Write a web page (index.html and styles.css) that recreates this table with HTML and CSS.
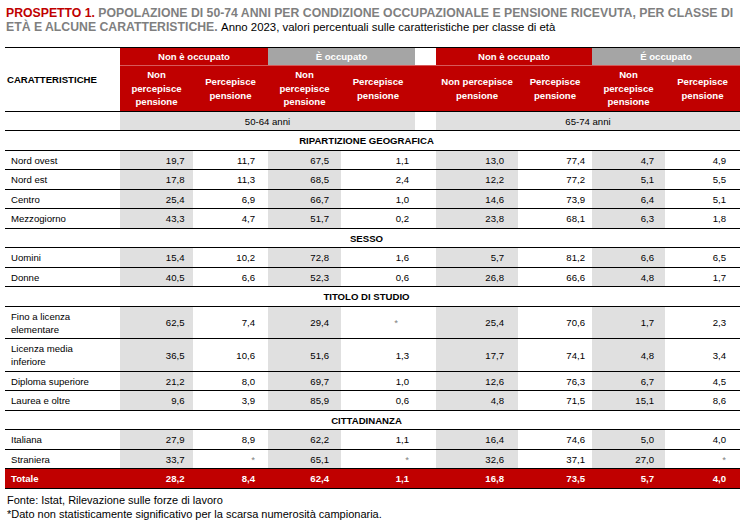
FILE: index.html
```html
<!DOCTYPE html>
<html lang="it">
<head>
<meta charset="utf-8">
<title>Prospetto 1</title>
<link rel="stylesheet" href="styles.css">
</head>
<body>
<div class="page">
  <h1 class="title"><span class="tag">PROSPETTO 1.</span> POPOLAZIONE DI 50-74 ANNI PER CONDIZIONE OCCUPAZIONALE E PENSIONE RICEVUTA, PER CLASSE DI<br>ETÀ E ALCUNE CARATTERISTICHE. <span class="sub">Anno 2023, valori percentuali sulle caratteristiche per classe di età</span></h1>
  <table class="tab">
    <colgroup>
      <col class="w0"><col class="w1"><col class="w2"><col class="w3"><col class="w4"><col class="wg"><col class="w5"><col class="w6"><col class="w7"><col class="w8">
    </colgroup>
    <thead>
      <tr class="h1">
        <th rowspan="2" class="carat">CARATTERISTICHE</th>
        <th colspan="2" class="red">Non è occupato</th>
        <th colspan="2" class="grey">È occupato</th>
        <th class="blank"></th>
        <th colspan="2" class="red">Non è occupato</th>
        <th colspan="2" class="grey">É occupato</th>
      </tr>
      <tr class="h2">
        <th>Non<br>percepisce<br>pensione</th>
        <th>Percepisce<br>pensione</th>
        <th>Non<br>percepisce<br>pensione</th>
        <th>Percepisce<br>pensione</th>
        <th></th>
        <th>Non percepisce<br>pensione</th>
        <th>Percepisce<br>pensione</th>
        <th>Non<br>percepisce<br>pensione</th>
        <th>Percepisce<br>pensione</th>
      </tr>
      <tr class="age">
        <td></td>
        <td colspan="4" class="band">50-64 anni</td>
        <td></td>
        <td colspan="4" class="band">65-74 anni</td>
      </tr>
    </thead>
    <tbody>
      <tr class="sec"><td colspan="10">RIPARTIZIONE GEOGRAFICA</td></tr>
      <tr class="row"><td>Nord ovest</td><td>19,7</td><td>11,7</td><td>67,5</td><td>1,1</td><td></td><td>13,0</td><td>77,4</td><td>4,7</td><td>4,9</td></tr>
      <tr class="row"><td>Nord est</td><td>17,8</td><td>11,3</td><td>68,5</td><td>2,4</td><td></td><td>12,2</td><td>77,2</td><td>5,1</td><td>5,5</td></tr>
      <tr class="row"><td>Centro</td><td>25,4</td><td>6,9</td><td>66,7</td><td>1,0</td><td></td><td>14,6</td><td>73,9</td><td>6,4</td><td>5,1</td></tr>
      <tr class="row"><td>Mezzogiorno</td><td>43,3</td><td>4,7</td><td>51,7</td><td>0,2</td><td></td><td>23,8</td><td>68,1</td><td>6,3</td><td>1,8</td></tr>
      <tr class="sec"><td colspan="10">SESSO</td></tr>
      <tr class="row"><td>Uomini</td><td>15,4</td><td>10,2</td><td>72,8</td><td>1,6</td><td></td><td>5,7</td><td>81,2</td><td>6,6</td><td>6,5</td></tr>
      <tr class="row"><td>Donne</td><td>40,5</td><td>6,6</td><td>52,3</td><td>0,6</td><td></td><td>26,8</td><td>66,6</td><td>4,8</td><td>1,7</td></tr>
      <tr class="sec"><td colspan="10">TITOLO DI STUDIO</td></tr>
      <tr class="row"><td>Fino a licenza<br>elementare</td><td>62,5</td><td>7,4</td><td>29,4</td><td><span class="ast ast-off">*</span></td><td></td><td>25,4</td><td>70,6</td><td>1,7</td><td>2,3</td></tr>
      <tr class="row"><td>Licenza media<br>inferiore</td><td>36,5</td><td>10,6</td><td>51,6</td><td>1,3</td><td></td><td>17,7</td><td>74,1</td><td>4,8</td><td>3,4</td></tr>
      <tr class="row"><td>Diploma superiore</td><td>21,2</td><td>8,0</td><td>69,7</td><td>1,0</td><td></td><td>12,6</td><td>76,3</td><td>6,7</td><td>4,5</td></tr>
      <tr class="row"><td>Laurea e oltre</td><td>9,6</td><td>3,9</td><td>85,9</td><td>0,6</td><td></td><td>4,8</td><td>71,5</td><td>15,1</td><td>8,6</td></tr>
      <tr class="sec"><td colspan="10">CITTADINANZA</td></tr>
      <tr class="row"><td>Italiana</td><td>27,9</td><td>8,9</td><td>62,2</td><td>1,1</td><td></td><td>16,4</td><td>74,6</td><td>5,0</td><td>4,0</td></tr>
      <tr class="row"><td>Straniera</td><td>33,7</td><td><span class="ast">*</span></td><td>65,1</td><td><span class="ast">*</span></td><td></td><td>32,6</td><td>37,1</td><td>27,0</td><td><span class="ast">*</span></td></tr>
      <tr class="row total"><td>Totale</td><td>28,2</td><td>8,4</td><td>62,4</td><td>1,1</td><td></td><td>16,8</td><td>73,5</td><td>5,7</td><td>4,0</td></tr>
    </tbody>
  </table>
  <div class="notes">
    <p>Fonte: Istat, Rilevazione sulle forze di lavoro</p>
    <p>*Dato non statisticamente significativo per la scarsa numerosità campionaria.</p>
  </div>
</div>
</body>
</html>
```
FILE: styles.css
```css
* { box-sizing: border-box; }
html, body { margin: 0; padding: 0; background: #fff; }
body { font-family: "Liberation Sans", Arial, sans-serif; color: #000; }

.page { padding: 7px 4px 0 5px; }

.title {
  margin: 0 0 0 1px;
  font-family: "Liberation Sans", Arial, sans-serif;
  font-size: 12.25px;
  line-height: 13.5px;
  font-weight: bold;
  color: #7f7f7f;
  white-space: nowrap;
}
.tag { color: #c00000; }
.sub { font-weight: normal; color: #000; font-size: 11.4px; }

.tab {
  margin-top: 13px;
  width: 735px;
  table-layout: fixed;
  border-collapse: collapse;
  font-size: 9.6px;
  line-height: 13px;
  border-top: 1px solid #000;
}
.w0 { width: 115px; }
.w1 { width: 73px; }
.w2 { width: 75px; }
.w3 { width: 73px; }
.w4 { width: 74px; }
.wg { width: 21px; }
.w5 { width: 82px; }
.w6 { width: 74px; }
.w7 { width: 73px; }
.w8 { width: 75px; }

.tab th, .tab td { padding: 0; }

.h1 th {
  height: 18px;
  color: #fff;
  font-weight: bold;
  text-align: center;
  vertical-align: middle;
}
.h1 .red { background: #c00000; }
.h1 .grey { background: #a5a5a5; }
.h1 .blank { background: #fff; }
.h1 .carat {
  color: #000;
  text-align: left;
  padding-left: 2px;
  background: #fff;
  border-bottom: 1px solid #000;
}
.h2 th {
  height: 46px;
  background: #c00000;
  color: #fff;
  font-weight: bold;
  text-align: center;
  vertical-align: middle;
  line-height: 13.5px;
  border-top: 1px solid #d65a5a;
  border-bottom: 1px solid #000;
}

.age td {
  height: 19px;
  text-align: center;
  border-bottom: 1px solid #000;
}
.age .band { background: #e0e0e0; }

.sec td {
  text-align: center;
  font-weight: bold;
  padding: 3px 12px 2.5px 0;
  border-bottom: 1px solid #000;
}

.row td {
  padding-top: 3px;
  padding-bottom: 2.5px;
  text-align: right;
  border-bottom: 1px solid #000;
  vertical-align: middle;
}
.row td:nth-child(1) { text-align: left; padding-left: 6px; }
.row td:nth-child(2) { padding-right: 8.5px; background: #e0e0e0; }
.row td:nth-child(3) { padding-right: 13px; }
.row td:nth-child(4) { padding-right: 12px; background: #e0e0e0; }
.row td:nth-child(5) { padding-right: 6px; }
.row td:nth-child(7) { padding-right: 14px; background: #e0e0e0; }
.row td:nth-child(8) { padding-right: 7px; }
.row td:nth-child(9) { padding-right: 11px; background: #e0e0e0; }
.row td:nth-child(10) { padding-right: 14px; }

.row.total td {
  background: #c00000;
  color: #fff;
  font-weight: bold;
}

.ast { color: #808080; font-size: 9.6px; }
.ast-off { margin-right: 11px; }

.notes {
  margin-top: 4px;
  font-size: 11px;
  line-height: 14px;
}
.notes p { margin: 0 0 0 2px; }
```
